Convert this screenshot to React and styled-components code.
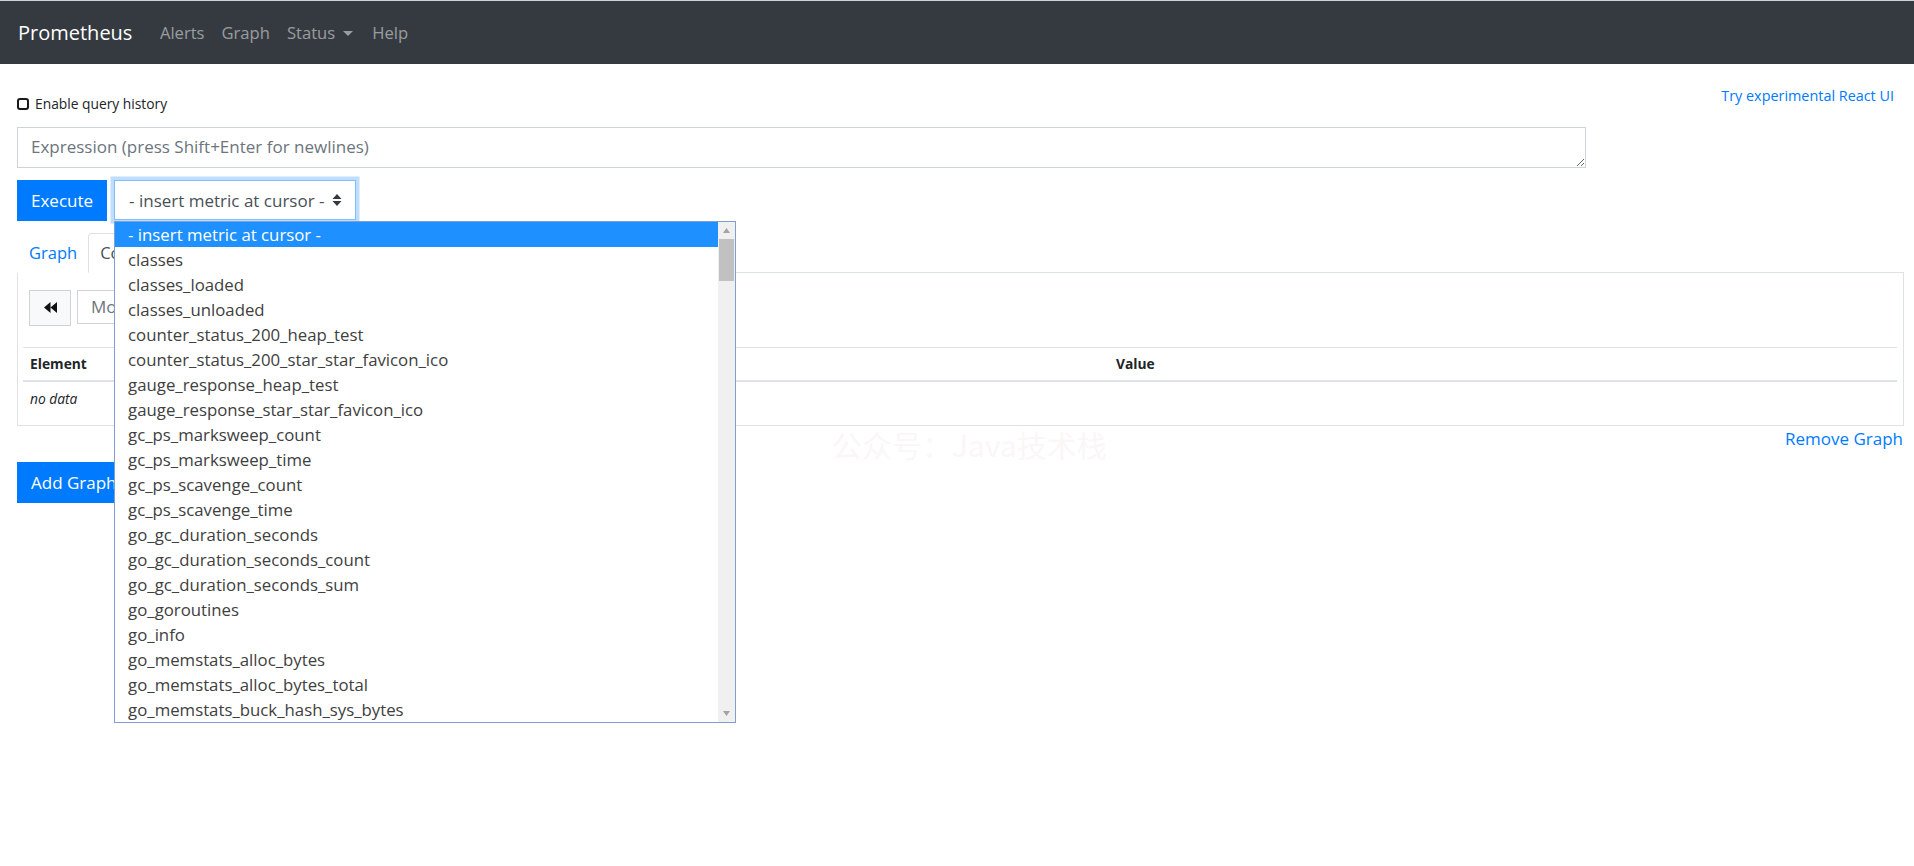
import React from "react";
import styled, { createGlobalStyle } from "styled-components";

const GlobalStyle = createGlobalStyle`
  * { box-sizing: border-box; }
  html, body { height: 100%; }
  body {
    margin: 0;
    background: #fff;
    color: #212529;
    font-family: "Open Sans", "Noto Sans", sans-serif;
  }
  #root { min-height: 100%; }
`;

const METRICS = [
  "classes",
  "classes_loaded",
  "classes_unloaded",
  "counter_status_200_heap_test",
  "counter_status_200_star_star_favicon_ico",
  "gauge_response_heap_test",
  "gauge_response_star_star_favicon_ico",
  "gc_ps_marksweep_count",
  "gc_ps_marksweep_time",
  "gc_ps_scavenge_count",
  "gc_ps_scavenge_time",
  "go_gc_duration_seconds",
  "go_gc_duration_seconds_count",
  "go_gc_duration_seconds_sum",
  "go_goroutines",
  "go_info",
  "go_memstats_alloc_bytes",
  "go_memstats_alloc_bytes_total",
  "go_memstats_buck_hash_sys_bytes",
];

const Navbar = styled.nav`
  height: 64px;
  border-top: 1px solid #cfd1d4;
  background: #343a40;
  display: flex;
  align-items: center;
  padding: 0 18px;
`;

const Brand = styled.a`
  color: #fff;
  font-size: 20px;
  margin-right: 19px;
  text-decoration: none;
`;

const NavLink = styled.a`
  color: rgba(255, 255, 255, 0.5);
  font-size: 16.6px;
  padding: 0 8.5px;
  display: flex;
  align-items: center;
  text-decoration: none;
`;

const Caret = styled.span`
  width: 0;
  height: 0;
  margin-left: 8px;
  margin-right: 2px;
  margin-top: 2px;
  border-top: 5px solid currentColor;
  border-left: 5px solid transparent;
  border-right: 5px solid transparent;
`;

const Main = styled.main`
  position: relative;
  min-height: 790px;
  padding: 0 10px 0 17px;
`;

const TopRow = styled.div`
  height: 63px;
  padding-top: 21px;
  display: flex;
  justify-content: space-between;
  align-items: flex-start;
`;

const CheckLabel = styled.label`
  margin-top: 9px;
  display: flex;
  align-items: center;
  gap: 6px;
  font-size: 13.8px;
  line-height: 20px;
  color: #212529;
`;

const CheckBox = styled.span`
  width: 12px;
  height: 12px;
  border: 2px solid #1a1a1a;
  border-radius: 3px;
`;

const SmallLink = styled.a`
  margin-right: 10px;
  font-size: 14.4px;
  line-height: 21px;
  color: #007bff;
  text-decoration: none;
`;

const Expression = styled.textarea`
  display: block;
  width: 1569px;
  height: 41px;
  margin: 0;
  padding: 6px 13px;
  border: 1px solid #ced4da;
  border-radius: 0;
  font-family: inherit;
  font-size: 17px;
  line-height: 25.5px;
  color: #495057;
  resize: vertical;
  &::placeholder {
    color: #6c757d;
  }
`;

const ExecRow = styled.div`
  margin-top: 12px;
  display: flex;
  align-items: flex-start;
  gap: 7px;
`;

const Button = styled.button`
  height: 41px;
  padding: 0 13px;
  border: 1px solid #007bff;
  border-radius: 0;
  background: #007bff;
  color: #fff;
  font-family: inherit;
  font-size: 17px;
`;

const SelectWrap = styled.div`
  position: relative;
  width: 242px;
  height: 40px;
`;

const SelectBox = styled.div`
  height: 40px;
  padding: 0 13px 0 14px;
  border: 1px solid #80bdff;
  box-shadow: 0 0 0 3.5px rgba(0, 123, 255, 0.25);
  display: flex;
  align-items: center;
  justify-content: space-between;
  font-size: 17px;
  color: #495057;
`;

const DropList = styled.div`
  position: absolute;
  top: 41px;
  left: 0;
  z-index: 10;
  width: 622px;
  height: 502px;
  border: 1px solid #7f9ed6;
  background: #fff;
  display: flex;
`;

const Options = styled.ul`
  flex: 1;
  margin: 0;
  padding: 0;
  list-style: none;
`;

const Option = styled.li`
  height: 25px;
  padding-left: 13px;
  font-size: 16.8px;
  line-height: 25px;
  white-space: nowrap;
  color: ${(p) => (p.$selected ? "#fff" : "#404040")};
  background: ${(p) => (p.$selected ? "#1e90ff" : "transparent")};
`;

const Scrollbar = styled.div`
  width: 17px;
  background: #f0f0f0;
  display: flex;
  flex-direction: column;
  align-items: center;
`;

const ScrollArrow = styled.div`
  height: 17px;
  display: flex;
  align-items: center;
  justify-content: center;
`;

const Thumb = styled.div`
  width: 15px;
  height: 42px;
  background: #c1c1c1;
`;

const ScrollTrack = styled.div`
  flex: 1;
`;

const Tabs = styled.ul`
  margin: 12px 0 0;
  padding: 0;
  list-style: none;
  display: flex;
  border-bottom: 1px solid #dee2e6;
`;

const Tab = styled.li`
  margin-bottom: -1px;
  padding: 6px 10px 6px 11px;
  border: 1px solid ${(p) => (p.$active ? "#dee2e6" : "transparent")};
  border-bottom-color: ${(p) => (p.$active ? "#fff" : "transparent")};
  border-radius: 4px 4px 0 0;
  background: #fff;
  font-size: 16.5px;
  line-height: 25.5px;
  color: ${(p) => (p.$active ? "#495057" : "#007bff")};
`;

const Panel = styled.div`
  height: 153px;
  padding: 17px 6px 0 5px;
  border: 1px solid #dee2e6;
  border-top: none;
`;

const Controls = styled.div`
  padding-left: 6px;
  display: flex;
  align-items: flex-start;
  gap: 6px;
`;

const IconButton = styled.button`
  width: 42px;
  height: 36px;
  padding: 0;
  border: 1px solid #cfd3d7;
  border-radius: 0;
  background: #f8f9fa;
  display: flex;
  align-items: center;
  justify-content: center;
`;

const MomentInput = styled.input`
  width: 200px;
  height: 34px;
  padding: 0 13px;
  border: 1px solid #ced4da;
  border-radius: 0;
  font-family: inherit;
  font-size: 17px;
  &::placeholder {
    color: #6c757d;
  }
`;

const Table = styled.table`
  width: 100%;
  margin-top: 21px;
  border-collapse: collapse;
  font-size: 13.8px;
`;

const Th = styled.th`
  width: ${(p) => p.$width || "auto"};
  padding: 6px 7px;
  border-top: 1px solid #dee2e6;
  border-bottom: 2px solid #dee2e6;
  text-align: left;
  font-weight: 700;
  line-height: 20px;
`;

const Td = styled.td`
  padding: 7px 7px;
  font-style: italic;
  line-height: 20px;
`;

const RemoveRow = styled.div`
  display: flex;
  justify-content: flex-end;
  margin-right: 1px;
`;

const TextLink = styled.a`
  font-size: 17px;
  line-height: 25px;
  color: #007bff;
  text-decoration: none;
`;

const AddRow = styled.div`
  margin-top: 11px;
`;

const Watermark = styled.div`
  position: absolute;
  top: 365px;
  left: 832px;
  font-family: "Noto Sans CJK SC", "Open Sans", sans-serif;
  font-size: 30px;
  line-height: 30px;
  color: #fbf7f7;
  pointer-events: none;
  white-space: nowrap;
`;

const UpDown = () => (
  <svg width="10" height="12" viewBox="0 0 10 12">
    <path d="M5 0 L9.5 5 H0.5 Z M5 12 L0.5 7 H9.5 Z" fill="#343a40" />
  </svg>
);

const Backward = () => (
  <svg width="13" height="11" viewBox="0 0 13 11">
    <path d="M0 5.5 L6.5 0 V11 Z M6.5 5.5 L13 0 V11 Z" fill="#111" />
  </svg>
);

const Tri = ({ up }) => (
  <svg width="7" height="5" viewBox="0 0 7 5">
    <path d={up ? "M3.5 0 L7 5 H0 Z" : "M0 0 H7 L3.5 5 Z"} fill="#a3a3a3" />
  </svg>
);

export default function App() {
  return (
    <>
      <GlobalStyle />
      <Navbar>
        <Brand>Prometheus</Brand>
        <NavLink>Alerts</NavLink>
        <NavLink>Graph</NavLink>
        <NavLink>
          Status <Caret />
        </NavLink>
        <NavLink>Help</NavLink>
      </Navbar>
      <Main>
        <TopRow>
          <CheckLabel>
            <CheckBox />
            Enable query history
          </CheckLabel>
          <SmallLink>Try experimental React UI</SmallLink>
        </TopRow>
        <Expression placeholder="Expression (press Shift+Enter for newlines)" />
        <ExecRow>
          <Button>Execute</Button>
          <SelectWrap>
            <SelectBox>
              <span>- insert metric at cursor -</span>
              <UpDown />
            </SelectBox>
            <DropList>
              <Options>
                <Option $selected>- insert metric at cursor -</Option>
                {METRICS.map((m) => (
                  <Option key={m}>{m}</Option>
                ))}
              </Options>
              <Scrollbar>
                <ScrollArrow>
                  <Tri up />
                </ScrollArrow>
                <Thumb />
                <ScrollTrack />
                <ScrollArrow>
                  <Tri />
                </ScrollArrow>
              </Scrollbar>
            </DropList>
          </SelectWrap>
        </ExecRow>
        <Tabs>
          <Tab>Graph</Tab>
          <Tab $active>Console</Tab>
        </Tabs>
        <Panel>
          <Controls>
            <IconButton>
              <Backward />
            </IconButton>
            <MomentInput placeholder="Moment" />
          </Controls>
          <Table>
            <thead>
              <tr>
                <Th $width="1086px">Element</Th>
                <Th>Value</Th>
              </tr>
            </thead>
            <tbody>
              <tr>
                <Td colSpan={2}>no data</Td>
              </tr>
            </tbody>
          </Table>
        </Panel>
        <RemoveRow>
          <TextLink>Remove Graph</TextLink>
        </RemoveRow>
        <AddRow>
          <Button>Add Graph</Button>
        </AddRow>
        <Watermark>公众号：Java技术栈</Watermark>
      </Main>
    </>
  );
}
